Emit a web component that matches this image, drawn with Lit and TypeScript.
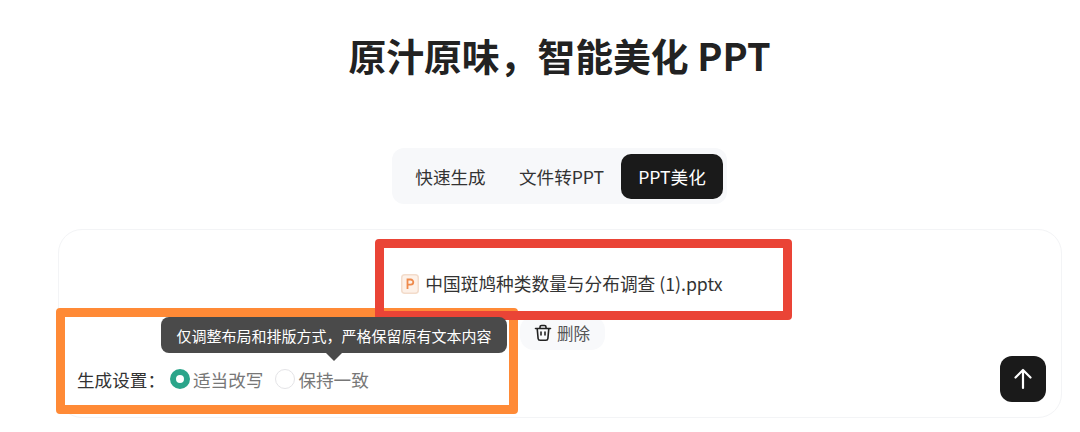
import { LitElement, html, css } from "lit";
import { customElement } from "lit/decorators.js";

@customElement("app-root")
export class AppRoot extends LitElement {
  static styles = css`
    :host {
      display: block;
      width: 1080px;
      height: 432px;
      overflow: hidden;
      background: #fff;
      font-family: "Noto Sans CJK SC", "Noto Sans", sans-serif;
      color: #333;
    }
    .page {
      display: flex;
      flex-direction: column;
      align-items: center;
      width: 1119px;
      padding-top: 27px;
    }
    h1 {
      margin: 0;
      height: 56px;
      line-height: 56px;
      font-size: 37.8px;
      font-weight: 700;
      color: #222;
      white-space: nowrap;
    }
    .tabs {
      margin-top: 65px;
      display: flex;
      align-items: center;
      height: 56px;
      box-sizing: border-box;
      padding: 0 4px 0 5px;
      background: #f7f8fa;
      border-radius: 12px;
      font-size: 17.6px;
      color: #333;
    }
    .tab {
      height: 45px;
      display: flex;
      align-items: center;
      justify-content: center;
      white-space: nowrap;
      border-radius: 10px;
    }
    .tab.a { width: 105px; padding-left: 2px; box-sizing: border-box; }
    .tab.b { width: 119px; }
    .tab.active { width: 102px; background: #1a1a1a; color: #fff; }
    .card {
      position: relative;
      align-self: flex-start;
      margin: 25px 0 0 58px;
      width: 1004px;
      height: 189px;
      box-sizing: border-box;
      border: 1px solid #f3f4f6;
      border-radius: 24px;
      display: flex;
      flex-direction: column;
      padding-top: 40px;
    }
    .file-area {
      display: flex;
      flex-direction: column;
      align-items: center;
      gap: 20px;
      padding-left: 4px;
    }
    .file {
      display: flex;
      align-items: center;
      gap: 6px;
      height: 26px;
      font-size: 17.7px;
      color: #333;
      white-space: nowrap;
    }
    .file svg { display: block; margin-top: 1px; }
    .del {
      display: flex;
      align-items: center;
      justify-content: center;
      gap: 5px;
      width: 85px;
      height: 34px;
      background: #f8f9fb;
      border-radius: 14px;
      font-size: 16.5px;
      color: #555;
    }
    .bottom {
      display: flex;
      align-items: center;
      justify-content: space-between;
      padding: 6px 15px 0 18px;
    }
    .settings {
      display: flex;
      align-items: center;
      font-size: 17.6px;
      color: #333;
      white-space: nowrap;
    }
    .label { width: 93px; }
    .radio {
      display: flex;
      align-items: center;
      gap: 3px;
      color: #777;
      margin-right: 12px;
    }
    .dot {
      width: 20px;
      height: 20px;
      box-sizing: border-box;
      border-radius: 50%;
      border: 1px solid #e4e4e7;
    }
    .dot.on { border: 6px solid #2ba58a; background: #fff; }
    .send {
      width: 46px;
      height: 46px;
      border-radius: 12px;
      background: #1a1a1a;
      display: flex;
      align-items: center;
      justify-content: center;
    }
    .mark {
      position: absolute;
      box-sizing: border-box;
      border-radius: 4px;
    }
    .mark.red { left: 316px; top: 9px; width: 417px; height: 81px; border: 9px solid #ea4436; }
    .mark.orange { left: -3px; top: 78px; width: 462px; height: 106px; border: 9px solid #ff8a36; }
    .tip {
      position: absolute;
      left: 102px;
      top: 87px;
      width: 346px;
      height: 36px;
      background: #4a4a4a;
      border-radius: 8px;
      color: #fff;
      font-size: 15px;
      display: flex;
      align-items: center;
      justify-content: center;
      white-space: nowrap;
    }
    .tip::after {
      content: "";
      position: absolute;
      left: 165px;
      top: 36px;
      border: 8px solid transparent;
      border-top-color: #4a4a4a;
      border-bottom-width: 0;
    }
  `;

  render() {
    return html`
      <div class="page">
        <h1>原汁原味，智能美化 PPT</h1>
        <div class="tabs">
          <div class="tab a">快速生成</div>
          <div class="tab b">文件转PPT</div>
          <div class="tab active">PPT美化</div>
        </div>
        <div class="card">
          <div class="file-area">
            <div class="file">
              <svg width="18" height="20" viewBox="0 0 18 20">
                <rect x="0.75" y="0.75" width="16.5" height="18.5" rx="3" fill="#fdf1e8" stroke="#f3dccb" stroke-width="1.5"/>
                <path d="M6.5 15V5.5h3.2a2.6 2.6 0 0 1 0 5.2H6.5" fill="none" stroke="#ee8a4c" stroke-width="1.8"/>
              </svg>
              <span>中国斑鸠种类数量与分布调查 (1).pptx</span>
            </div>
            <div class="del">
              <svg width="18" height="18" viewBox="0 0 18 18" fill="none" stroke="#222" stroke-width="1.6" stroke-linecap="round" stroke-linejoin="round">
                <path d="M1.5 4.5h15M6 4.5V3a1.5 1.5 0 0 1 1.5-1.5h3A1.5 1.5 0 0 1 12 3v1.5M3.2 4.5l.9 10a2 2 0 0 0 2 1.8h5.8a2 2 0 0 0 2-1.8l.9-10M7 8v3M11 8v3"/>
              </svg>
              <span>删除</span>
            </div>
          </div>
          <div class="bottom">
            <div class="settings">
              <span class="label">生成设置：</span>
              <div class="radio"><span class="dot on"></span><span>适当改写</span></div>
              <div class="radio"><span class="dot"></span><span>保持一致</span></div>
            </div>
            <div class="send">
              <svg width="20" height="22" viewBox="0 0 20 22" fill="none" stroke="#fff" stroke-width="2.2" stroke-linecap="round" stroke-linejoin="round">
                <path d="M10 20V2M2.5 9.5 10 2l7.5 7.5"/>
              </svg>
            </div>
          </div>
          <div class="mark orange"></div>
          <div class="mark red"></div>
          <div class="tip">仅调整布局和排版方式，严格保留原有文本内容</div>
        </div>
      </div>
    `;
  }
}
